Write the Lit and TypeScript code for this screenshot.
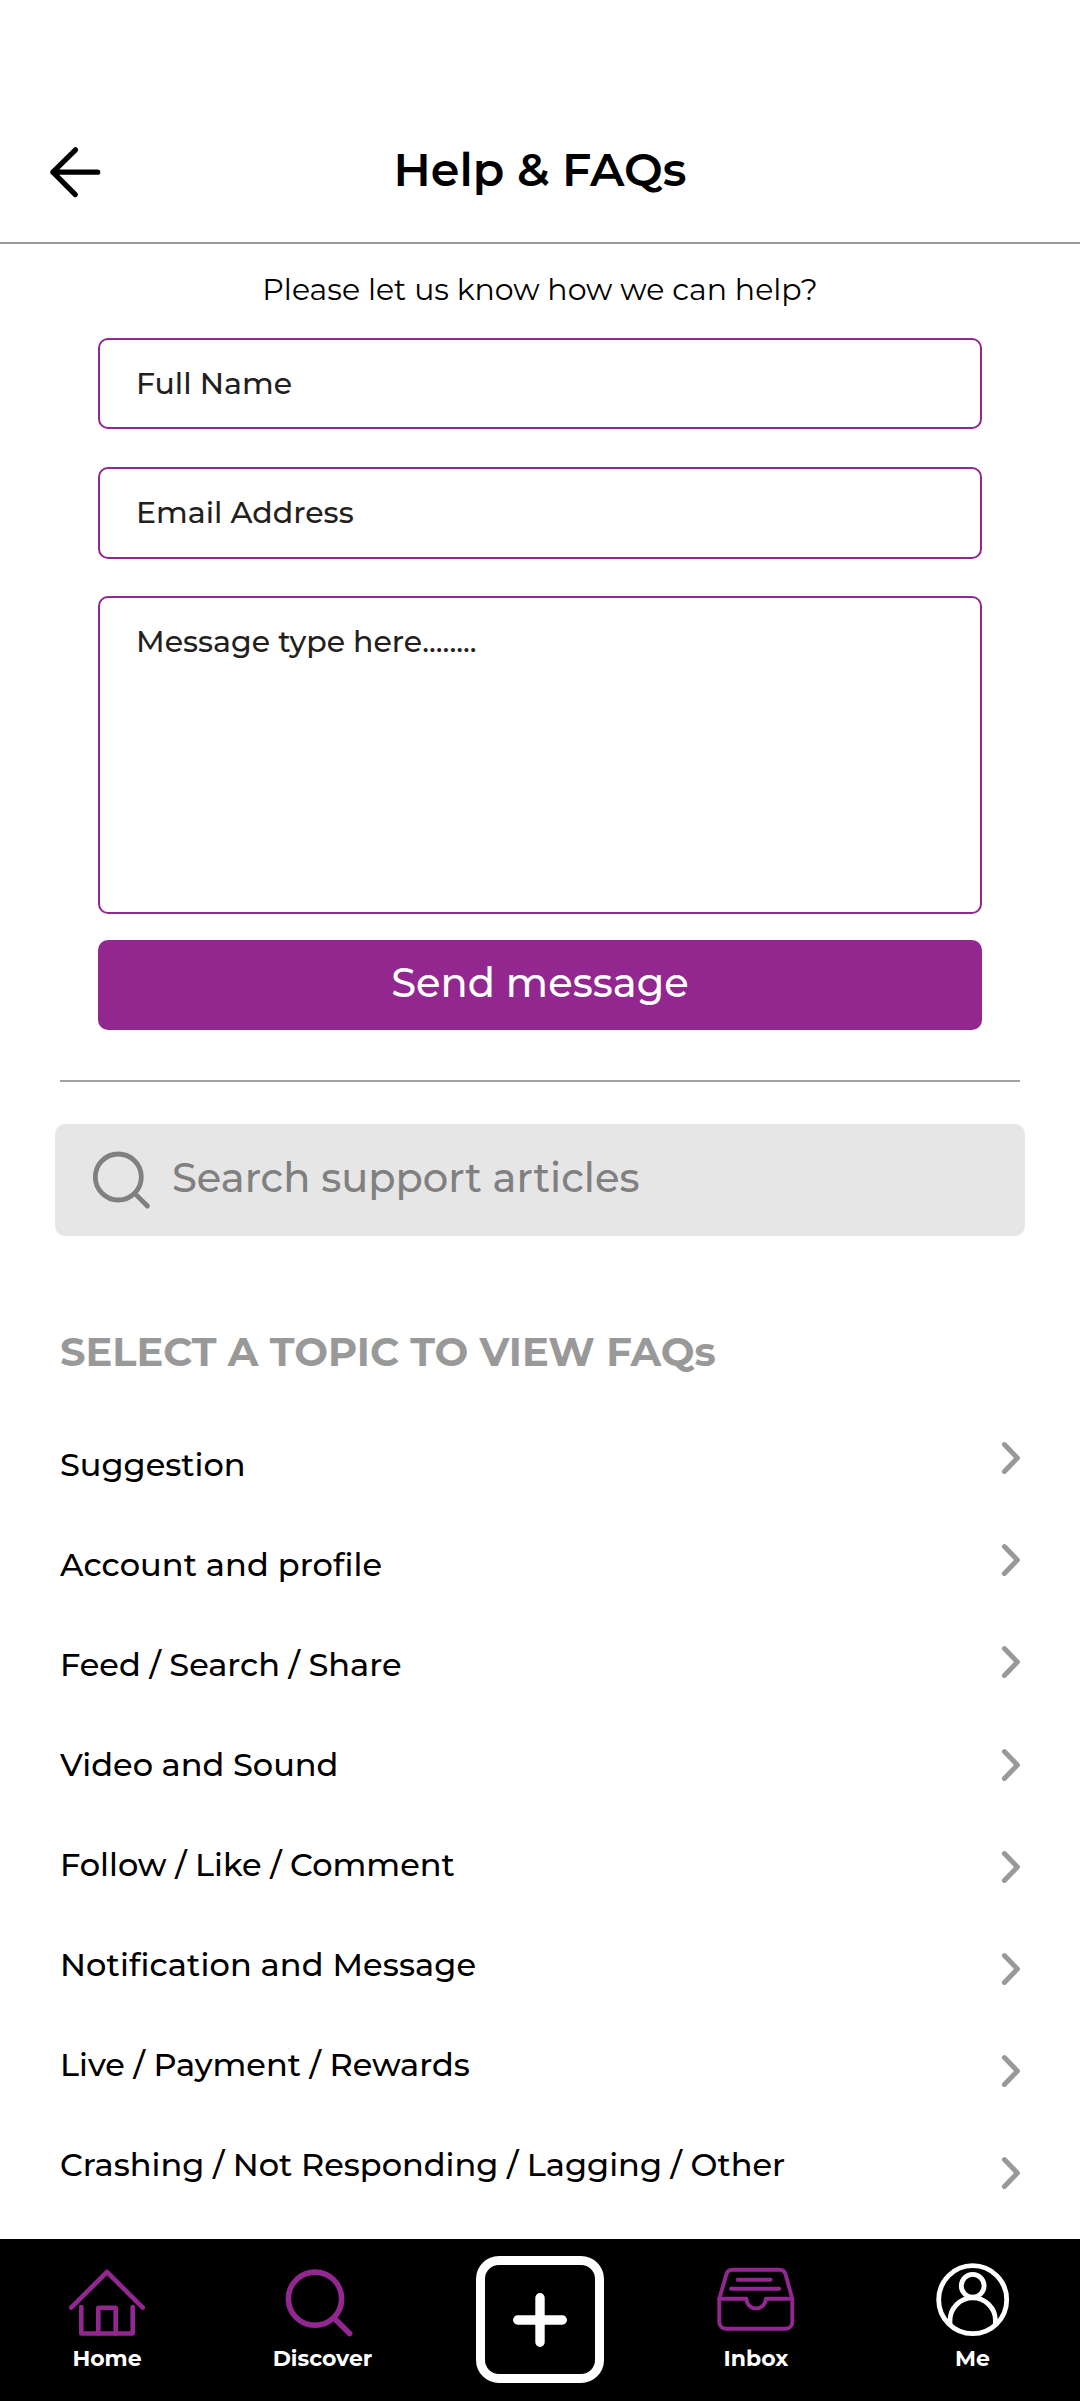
import { LitElement, html, css, svg } from "lit";
import { customElement } from "lit/decorators.js";
import { classMap } from "lit/directives/class-map.js";

const TOPICS = [
  "Suggestion",
  "Account and profile",
  "Feed / Search / Share",
  "Video and Sound",
  "Follow / Like / Comment",
  "Notification and Message",
  "Live / Payment / Rewards",
  "Crashing / Not Responding / Lagging / Other",
];

const homeIcon = svg`
  <g stroke-width="4.6">
    <path d="M6.2 45.6 42 10l35.8 35.6" />
    <path d="M16.3 45v26.5h51.4V45" />
    <path d="M33.3 71.5V45.8h17.4v25.7" />
  </g>`;

const discoverIcon = svg`
  <g stroke-width="5.6">
    <circle cx="34" cy="36.7" r="26.6" />
    <path d="M53.5 56.5 68.6 71.6" />
  </g>`;

const inboxIcon = svg`
  <g stroke-width="3.9">
    <path d="M5.3 36.7V60.2a6.5 6.5 0 0 0 6.5 6.5H71.8a6.5 6.5 0 0 0 6.5-6.5V36.7L71.6 12.6a6.5 6.5 0 0 0-6.3-4.9H18.6a6.5 6.5 0 0 0-6.3 4.9z" />
    <path d="M5.3 36.7H32.4a9.7 9.7 0 0 0 19.4 0H78.3" />
    <path d="M23.7 17.7h33M17 26.7h48.3" />
  </g>`;

const profileIcon = svg`
  <g stroke-width="4.8">
    <circle cx="41.7" cy="37.7" r="34" />
    <circle cx="41.7" cy="23.8" r="11.4" />
    <path d="M19 62v-3.5a22.7 22.7 0 0 1 45.4 0V62" />
  </g>`;

@customElement("app-root")
export class AppRoot extends LitElement {
  static styles = css`
    :host {
      display: flex;
      flex-direction: column;
      height: 2401px;
      background: #fff;
      color: #000;
      font-family: "Montserrat", "Inter", sans-serif;
      font-weight: 500;
    }
    * {
      box-sizing: border-box;
    }
    h1,
    h2,
    p,
    ul {
      margin: 0;
      padding: 0;
      list-style: none;
    }
    svg {
      display: block;
      fill: none;
      stroke: currentColor;
      stroke-linecap: round;
      stroke-linejoin: round;
    }
    header {
      display: grid;
      grid-template-columns: 1fr auto 1fr;
      align-items: center;
      height: 244px;
      padding: 97px 48px 0;
      border-bottom: 2px solid #9c9c9c;
    }
    .back {
      width: 56px;
      height: 56px;
      margin-top: 4px;
    }
    h1 {
      font-size: 46px;
      font-weight: 600;
      line-height: 56px;
    }
    form {
      display: flex;
      flex-direction: column;
      padding: 26px 98px 0;
    }
    .intro {
      font-size: 30px;
      font-weight: 400;
      line-height: 40px;
      text-align: center;
    }
    .field {
      height: 91px;
      margin-top: 28px;
      padding: 0 36px;
      border: 2px solid #92278f;
      border-radius: 10px;
      color: #231f20;
      font-size: 30px;
      line-height: 87px;
    }
    .email {
      height: 92px;
      margin-top: 38px;
    }
    .message {
      height: 318px;
      margin-top: 37px;
      padding-top: 24px;
      line-height: 40px;
    }
    .send {
      height: 90px;
      margin-top: 26px;
      border-radius: 10px;
      background: #92278f;
      color: #fff;
      font-size: 40px;
      line-height: 86px;
      text-align: center;
    }
    .rule {
      height: 2px;
      margin: 50px 60px 0;
      background: #a3a3a3;
    }
    .search {
      display: flex;
      align-items: center;
      gap: 20px;
      height: 112px;
      margin: 42px 55px 0;
      padding-left: 35px;
      border-radius: 10px;
      background: #e6e6e6;
      color: #808080;
      font-size: 40px;
      line-height: 48px;
    }
    .search span {
      padding-bottom: 4px;
    }
    h2 {
      margin: 92px 60px 0;
      color: #999;
      font-size: 40px;
      font-weight: 700;
      line-height: 48px;
    }
    .topics {
      display: grid;
      grid-template-columns: 1fr auto;
      align-items: start;
      margin: 31px 60px 0;
    }
    .names {
      padding-top: 8px;
      font-size: 32px;
      line-height: 100px;
    }
    .spaced {
      letter-spacing: 0.12px;
    }
    .arrows li {
      display: flex;
      align-items: center;
      height: 102.2px;
      color: #999;
    }
    nav {
      display: grid;
      grid-template-columns: 214px 217px 218px 214px 217px;
      height: 162px;
      margin-top: auto;
      background: #000;
      color: #fff;
    }
    .tab {
      display: flex;
      flex-direction: column;
      align-items: center;
      padding-top: 23px;
      font-size: 22px;
      font-weight: 700;
      line-height: 28px;
    }
    .tab svg {
      margin-bottom: 3px;
    }
    .tab:last-child {
      padding-left: 2px;
    }
    .purple {
      color: #92278f;
    }
    .add {
      display: flex;
      align-items: center;
      justify-content: center;
      justify-self: center;
      width: 128px;
      height: 127px;
      margin-top: 17px;
      border: 9px solid #fff;
      border-radius: 23px;
    }
  `;

  private tab(label: string, icon: unknown, tone = "") {
    return html`<div class="tab">
      <svg class=${tone} width="84" height="80" viewBox="0 0 84 80">${icon}</svg>
      <span>${label}</span>
    </div>`;
  }

  render() {
    return html`
      <header>
        <svg class="back" viewBox="0 0 56 56" stroke-width="5.2">
          <path d="M27.5 5.8 4.9 28.2l22.4 22.4M4.9 28.2H49.7" />
        </svg>
        <h1>Help &amp; FAQs</h1>
      </header>
      <form>
        <p class="intro">Please let us know how we can help?</p>
        <div class="field">Full Name</div>
        <div class="field email">Email Address</div>
        <div class="field message">Message type here........</div>
        <div class="send">Send message</div>
      </form>
      <div class="rule"></div>
      <div class="search">
        <svg width="62" height="62" viewBox="0 0 62 62" stroke-width="4.8">
          <circle cx="28.3" cy="28" r="23" />
          <path d="M45 44.6 57.4 57" />
        </svg>
        <span>Search support articles</span>
      </div>
      <h2>SELECT A TOPIC TO VIEW FAQs</h2>
      <div class="topics">
        <ul class="names">
          ${TOPICS.map(
            (name) => html`<li class=${classMap({ spaced: name.includes("fi") })}>${name}</li>`
          )}
        </ul>
        <ul class="arrows">
          ${TOPICS.map(
            () => html`<li>
              <svg width="20" height="34" viewBox="0 0 20 34" stroke-width="5">
                <path d="M4.4 3.6 17.4 17 4.4 30.4" />
              </svg>
            </li>`
          )}
        </ul>
      </div>
      <nav>
        ${this.tab("Home", homeIcon, "purple")}
        ${this.tab("Discover", discoverIcon, "purple")}
        <div class="add">
          <svg width="60" height="60" viewBox="0 0 60 60" stroke-width="9.4">
            <path d="M7.7 30h44.6M30 7.7v44.6" />
          </svg>
        </div>
        ${this.tab("Inbox", inboxIcon, "purple")}
        ${this.tab("Me", profileIcon)}
      </nav>
    `;
  }
}
